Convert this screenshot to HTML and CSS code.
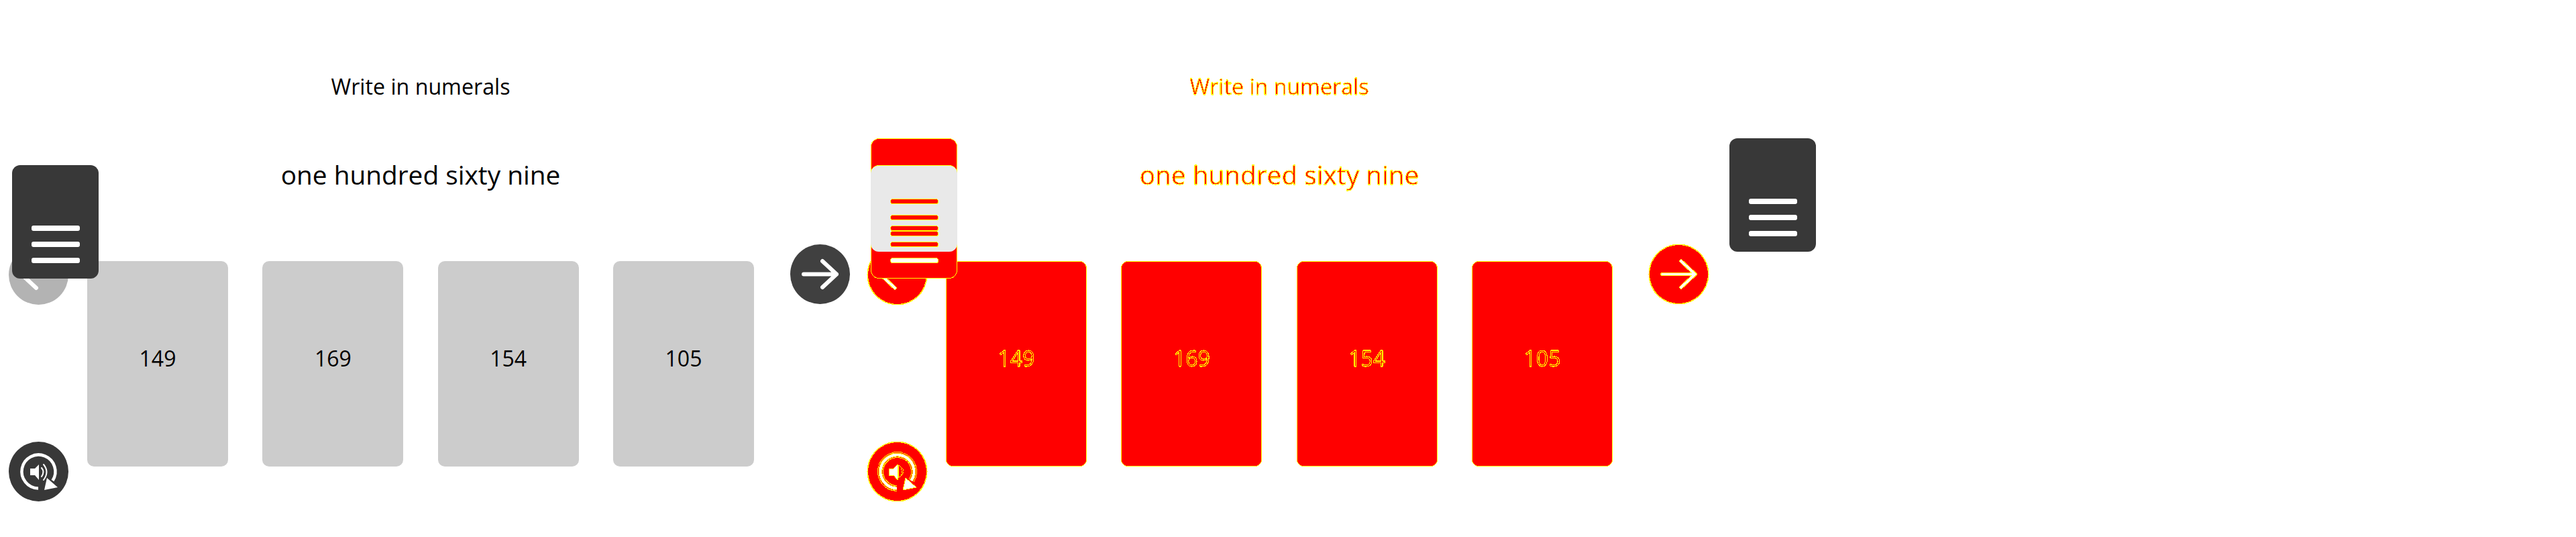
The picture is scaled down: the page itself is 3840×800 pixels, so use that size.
FILE: index.html
```html
<!DOCTYPE html>
<html lang="en">
<head>
    <meta charset="UTF-8">
    <meta name="viewport" content="width=device-width, initial-scale=1.0">
    <title>Write in numerals</title>
    <link rel="stylesheet" href="styles.css">
</head>
<body>
  <!-- hard edge filter for the red panel -->
  <svg class="defs">
    <filter id="crisp" color-interpolation-filters="sRGB" x="0" y="0" width="100%" height="100%">
      <feComponentTransfer>
        <feFuncR type="discrete" tableValues="0 1"/>
        <feFuncG type="discrete" tableValues="0 1"/>
        <feFuncB type="discrete" tableValues="0 1"/>
        <feFuncA type="discrete" tableValues="0 1"/>
      </feComponentTransfer>
    </filter>
  </svg>

  <section class="panel">
    <div class="menu menu-low"><span></span><span></span><span></span></div>
    <p class="title">Write in numerals</p>
    <p class="prompt">one hundred sixty nine</p>
    <div class="row">
      <div class="side">
        <div class="circle back">
          <svg viewBox="0 0 89 89"><path class="arrow" d="M69 44.5H20M41 25L20 44.5L41 64"/></svg>
        </div>
        <div class="circle audio">
          <svg viewBox="0 0 89 89">
            <path class="ring" d="M44 69.5A25 25 0 1 1 65.5 58"/>
            <path class="solid" d="M53 72L57 54L73 68Z"/>
            <path class="solid" d="M32 40H39L45 34V57L39 50H32Z"/>
            <path class="wave" d="M49 39Q54 45 49 52M52 34Q61 45 52 57"/>
          </svg>
        </div>
      </div>
      <div class="cards">
        <div class="card">149</div>
        <div class="card">169</div>
        <div class="card">154</div>
        <div class="card">105</div>
      </div>
      <div class="circle next">
        <svg viewBox="0 0 89 89"><path class="arrow" d="M20 44.5H69M48 25L69 44.5L48 64"/></svg>
      </div>
    </div>
  </section>

  <section class="panel diff">
    <div class="menu menu-high"><span></span><span></span><span></span></div>
    <div class="menu menu-low"><span></span><span></span><span></span></div>
    <div class="overlap">
      <span></span><span></span><span></span><span></span><span></span>
    </div>
    <div class="menu menu-high menu-far"><span></span><span></span><span></span></div>
    <p class="title">Write in numerals</p>
    <p class="prompt">one hundred sixty nine</p>
    <div class="row">
      <div class="side">
        <div class="circle back">
          <svg viewBox="0 0 89 89">
            <path class="arrow-edge" d="M69 44.5H20M41 25L20 44.5L41 64"/>
            <path class="arrow" d="M69 44.5H20M41 25L20 44.5L41 64"/>
          </svg>
        </div>
        <div class="circle audio">
          <svg viewBox="0 0 89 89">
            <path class="ring-edge" d="M44 69.5A25 25 0 1 1 65.5 58"/>
            <path class="ring-gap" d="M44 69.5A25 25 0 1 1 65.5 58"/>
            <path class="ring-inner" d="M44 69.5A25 25 0 1 1 65.5 58"/>
            <path class="ring" d="M44 69.5A25 25 0 1 1 65.5 58"/>
            <path class="solid" d="M53 72L57 54L73 68Z"/>
            <path class="solid" d="M32 40H39L45 34V57L39 50H32Z"/>
            <path class="wave-box" d="M46 35Q62 44 46 54Z"/>
            <path class="wave" d="M50 40Q53 45 50 50"/>
          </svg>
        </div>
      </div>
      <div class="cards">
        <div class="card">149</div>
        <div class="card">169</div>
        <div class="card">154</div>
        <div class="card">105</div>
      </div>
      <div class="circle next">
        <svg viewBox="0 0 89 89">
          <path class="arrow-edge" d="M20 44.5H69M48 25L69 44.5L48 64"/>
          <path class="arrow" d="M20 44.5H69M48 25L69 44.5L48 64"/>
        </svg>
      </div>
    </div>
  </section>
</body>
</html>
```

FILE: styles.css
```css
body {
  margin: 0;
  display: flex;
  width: 3840px;
  background: white;
  color: black;
  font-family: "Open Sans", sans-serif;
}

.defs {
  position: absolute;
  width: 0;
  height: 0;
}

.panel {
  position: relative;
  width: 1280px;
  height: 800px;
  flex: none;
  padding-top: 107px;
  box-sizing: border-box;
}

/* headings */
.title,
.prompt {
  margin: 0;
  margin-left: 130px;
  width: 994px;
  text-align: center;
}
.title {
  font-size: 32.2px;
  line-height: 44px;
}
.prompt {
  font-size: 38.8px;
  line-height: 54px;
  margin-top: 82px;
}

/* main row */
.row {
  display: flex;
  margin-top: 78px;
}
.side {
  width: 89px;
  margin-left: 13px;
  margin-right: 28px;
  display: flex;
  flex-direction: column;
  gap: 204px;
}
.circle {
  width: 89px;
  height: 89px;
  border-radius: 50%;
  box-sizing: border-box;
}
.circle svg {
  display: block;
  width: 89px;
  height: 89px;
}
.back {
  background: #b3b3b3;
}
.audio {
  background: #383838;
}
.next {
  background: #404040;
  margin-left: 54px;
  margin-top: -1px;
}

.arrow,
.ring,
.wave {
  fill: none;
  stroke: white;
  stroke-linecap: round;
  stroke-linejoin: round;
}
.arrow {
  stroke-width: 6;
}
.ring {
  stroke-width: 4.5;
  stroke-linecap: butt;
}
.wave {
  stroke-width: 2;
}
.solid {
  fill: white;
}

.cards {
  width: 994px;
  display: flex;
  justify-content: space-between;
  margin-top: 24px;
}
.card {
  width: 210px;
  height: 306px;
  box-sizing: border-box;
  background: #cccccc;
  border-radius: 10px;
  font-size: 32px;
  padding-bottom: 17px;
  display: flex;
  align-items: center;
  justify-content: center;
}

/* menu tab, sits over the row */
.menu {
  position: absolute;
  z-index: 1;
  left: 18px;
  width: 129px;
  height: 169px;
  box-sizing: border-box;
  background: #383838;
  border-radius: 12px;
  display: flex;
  flex-direction: column;
  align-items: center;
  justify-content: flex-end;
  gap: 16px;
  padding-bottom: 23px;
}
.menu span {
  width: 72px;
  height: 8px;
  border-radius: 3px;
  background: white;
}
.menu-high {
  top: 206px;
}
.menu-low {
  top: 246px;
}

/* second panel */
.diff .title,
.diff .prompt,
.diff .card {
  color: #ff0000;
  -webkit-text-stroke: 1px #ffff00;
  filter: url(#crisp);
}
.diff .card,
.diff .circle {
  background: #ff0000;
  border: 1px solid #ffff00;
}
.diff .circle {
  box-shadow: 0 0 0 0.5px #ffff00;
  filter: url(#crisp);
}
.diff .circle svg {
  margin: -1px;
}
.diff .arrow {
  stroke-width: 3.5;
}
.diff .arrow-edge {
  fill: none;
  stroke: #ffff00;
  stroke-width: 5.5;
  stroke-linecap: round;
  stroke-linejoin: round;
}
.diff .ring-edge,
.diff .ring-gap,
.diff .ring-inner {
  fill: none;
  stroke: #ffff00;
  stroke-width: 9;
}
.diff .ring-gap {
  stroke: #ff0000;
  stroke-width: 7;
}
.diff .ring-inner {
  stroke-width: 5.5;
}
.diff .ring {
  stroke-width: 3.5;
}
.diff .solid {
  stroke: #ffff00;
  stroke-width: 1;
}
.diff .wave-box {
  fill: #ff0000;
  stroke: #ffff00;
  stroke-width: 1;
}
.diff .wave {
  stroke: #ffff00;
  stroke-width: 1;
}
.diff .menu {
  background: #ff0000;
  border: 1px solid #ffff00;
  padding-bottom: 22px;
  filter: url(#crisp);
}
.diff .menu span {
  box-sizing: border-box;
  border: 1px solid #ffff00;
}
.diff .menu-far {
  left: 1298px;
  background: #383838;
  border: none;
  padding-bottom: 23px;
  filter: none;
}
.diff .menu-far span {
  border: none;
}
.overlap {
  position: absolute;
  z-index: 1;
  left: 18px;
  top: 246px;
  width: 129px;
  height: 129px;
  box-sizing: border-box;
  background: #e9e9e9;
  border-top: 1px solid #ffff00;
  border-radius: 12px;
  padding-top: 49px;
  display: flex;
  flex-direction: column;
  align-items: center;
}
.overlap span {
  flex: none;
  width: 72px;
  height: 8px;
  box-sizing: border-box;
  background: #ff0000;
  border: 1px solid #ffff00;
  border-radius: 3px;
  filter: url(#crisp);
}
.overlap span:nth-child(1) {
  margin-bottom: 16px;
}
.overlap span:nth-child(2),
.overlap span:nth-child(4) {
  margin-bottom: 8px;
}
```
